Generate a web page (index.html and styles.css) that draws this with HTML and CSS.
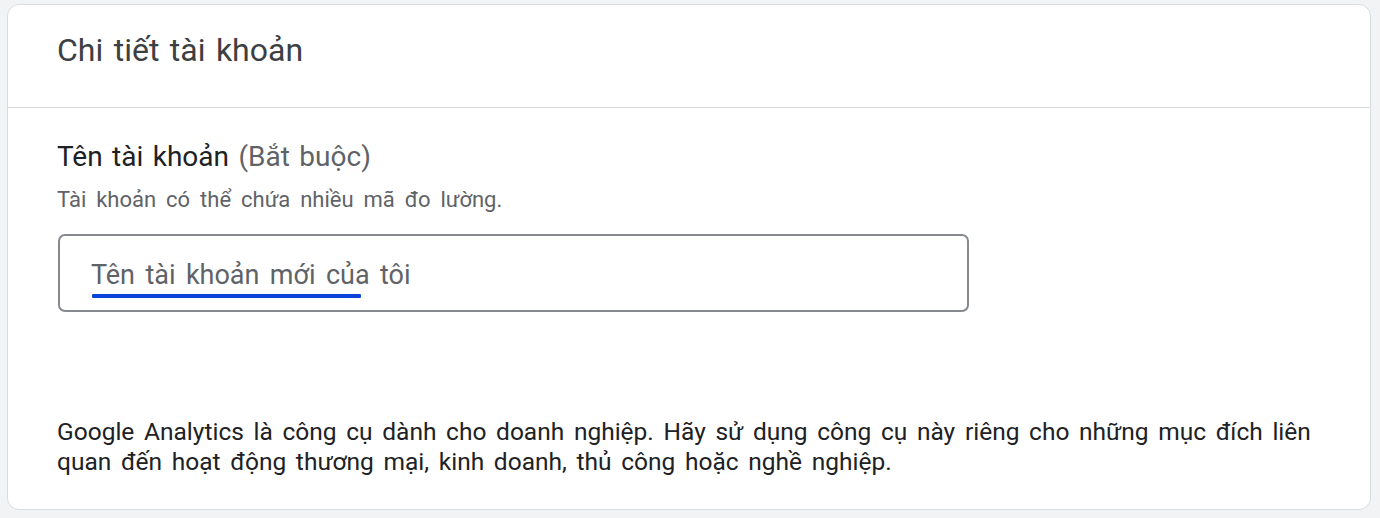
FILE: index.html
```html
<!DOCTYPE html>
<html lang="vi">
<head>
<meta charset="utf-8">
<title>Chi tiết tài khoản</title>
<link rel="stylesheet" href="styles.css">
</head>
<body>
<section class="card">
  <header class="card-header">
    <h2 class="title">Chi tiết tài khoản</h2>
  </header>
  <div class="card-body">
    <div class="field-label">Tên tài khoản <span class="req">(Bắt buộc)</span></div>
    <div class="hint">Tài khoản có thể chứa nhiều mã đo lường.</div>
    <div class="input-box">
      <span class="placeholder">Tên tài khoản mới của tôi</span>
      <span class="mark"></span>
    </div>
    <p class="notice">Google Analytics là công cụ dành cho doanh nghiệp. Hãy sử dụng công cụ này riêng cho những mục đích liên quan đến hoạt động thương mại, kinh doanh, thủ công hoặc nghề nghiệp.</p>
  </div>
</section>
</body>
</html>
```

FILE: styles.css
```css
html, body {
  margin: 0;
  padding: 0;
  background: #f1f3f4;
}
body {
  padding: 4px 9px 0 7px;
  font-family: Roboto, "Liberation Sans", Arial, sans-serif;
  color: #202124;
}
.card {
  background: #fff;
  border: 1px solid #dadce0;
  border-radius: 12px;
}
.card-header {
  height: 103px;
  box-sizing: border-box;
  border-bottom: 1px solid #dadce0;
  padding: 25px 49px 0 49px;
}
.title {
  margin: 0;
  font-size: 32px;
  line-height: 40px;
  font-weight: 400;
  word-spacing: 2.5px;
  color: #3c4043;
}
.card-body {
  padding: 31px 49px 32px 49px;
}
.field-label {
  font-size: 28px;
  line-height: 36px;
  word-spacing: 2.5px;
  color: #202124;
}
.req {
  color: #5f6368;
}
.hint {
  margin-top: 11px;
  font-size: 22px;
  line-height: 28px;
  word-spacing: 4.5px;
  color: #5f6368;
}
.input-box {
  position: relative;
  margin-top: 20px;
  margin-left: 1px;
  width: 911px;
  height: 78px;
  box-sizing: border-box;
  border: 2px solid #868a8f;
  border-radius: 7px;
  padding: 3px 0 0 31px;
  display: flex;
  align-items: center;
}
.placeholder {
  font-size: 27px;
  line-height: 34px;
  word-spacing: 3.7px;
  color: #5f6368;
}
.mark {
  position: absolute;
  left: 32px;
  top: 58px;
  width: 269px;
  height: 4px;
  border-radius: 1px;
  background: #0b43db;
}
.notice {
  margin: 105px 0 0;
  font-size: 24.5px;
  line-height: 30px;
  word-spacing: 3.6px;
  color: #202124;
}
```
